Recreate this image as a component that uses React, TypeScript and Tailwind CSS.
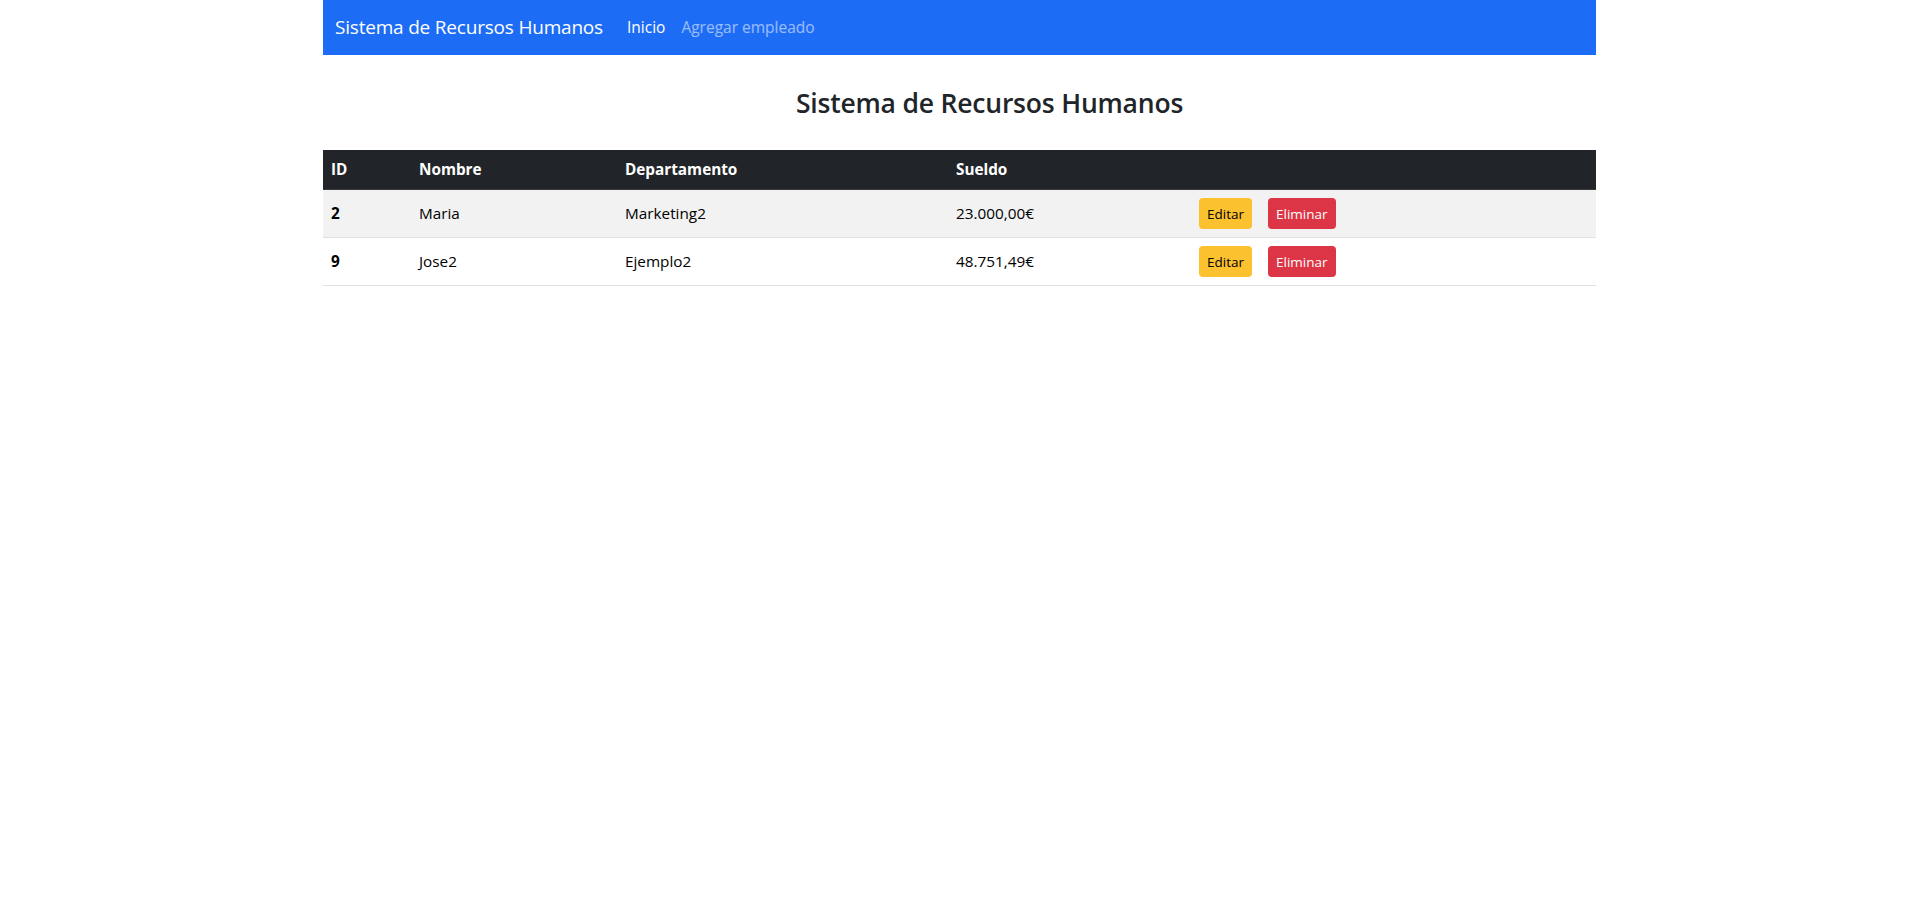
import React from "react";

const rows = [
  { id: 2, nombre: "Maria", departamento: "Marketing2", sueldo: "23.000,00€" },
  { id: 9, nombre: "Jose2", departamento: "Ejemplo2", sueldo: "48.751,49€" },
];

export default function App() {
  return (
    <div className="min-h-[911px] bg-white text-[#212529] [font-family:'Open_Sans',sans-serif]">
      <nav className="mx-auto flex h-[55px] w-[1273px] items-center bg-[#1d6cf6] px-3">
        <span className="mr-4 text-[19px] tracking-[-0.2px] text-white">Sistema de Recursos Humanos</span>
        <span className="px-2 text-[15.5px] text-white">Inicio</span>
        <span className="px-2 text-[15.5px] text-white/55">Agregar empleado</span>
      </nav>
      <div className="mx-auto w-[1273px]">
        <h3 className="pt-[33px] pb-[30px] pl-[60px] text-center text-[26.5px] leading-[1.2] font-semibold tracking-[-0.2px]">
          Sistema de Recursos Humanos
        </h3>
        <table className="w-full border-collapse text-[15.3px]">
          <thead>
            <tr className="h-[40px] bg-[#212529] text-left text-white">
              <th className="w-[88px] border-b border-[#373b3e] px-2 font-bold">ID</th>
              <th className="w-[206px] border-b border-[#373b3e] px-2 font-bold">Nombre</th>
              <th className="w-[331px] border-b border-[#373b3e] px-2 font-bold">Departamento</th>
              <th className="w-[243px] border-b border-[#373b3e] px-2 font-bold">Sueldo</th>
              <th className="border-b border-[#373b3e] px-2"></th>
            </tr>
          </thead>
          <tbody>
            {rows.map((r, i) => (
              <tr
                key={r.id}
                className={`h-[48px] border-b border-[#dee2e6] ${i === 0 ? "bg-[#f2f2f2]" : "bg-white"}`}
              >
                <th className="px-2 text-left font-bold text-black">{r.id}</th>
                <td className="px-2 text-black">{r.nombre}</td>
                <td className="px-2 text-black">{r.departamento}</td>
                <td className="px-2 text-black">{r.sueldo}</td>
                <td className="px-2">
                  <div className="flex items-center gap-4">
                    <button className="h-[31px] rounded-[4px] bg-[#fcc12e] px-2 text-[13.5px] text-black">
                      Editar
                    </button>
                    <button className="h-[31px] rounded-[4px] bg-[#dc3545] px-2 text-[13.5px] text-white">
                      Eliminar
                    </button>
                  </div>
                </td>
              </tr>
            ))}
          </tbody>
        </table>
      </div>
    </div>
  );
}
